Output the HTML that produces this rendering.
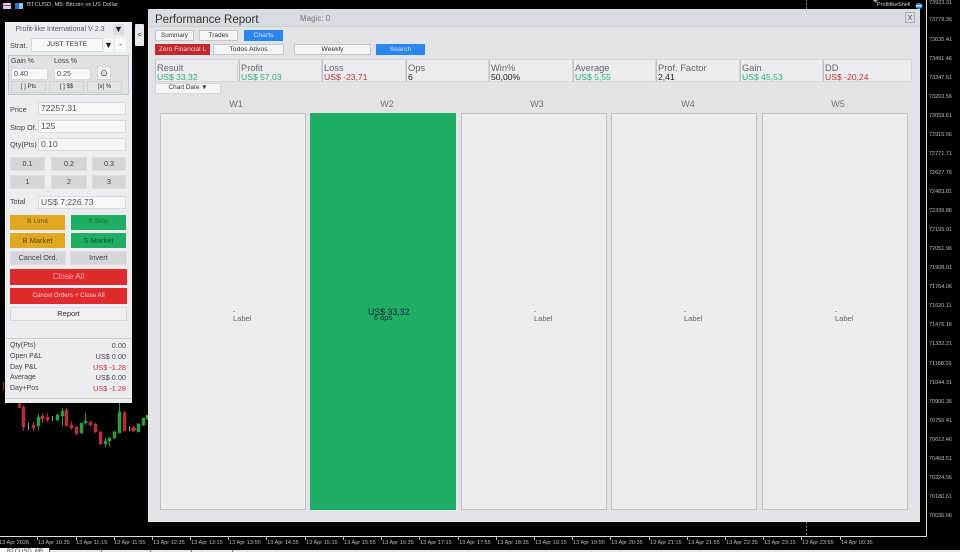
<!DOCTYPE html>
<html><head><meta charset="utf-8"><style>
*{box-sizing:border-box}
html,body{margin:0;padding:0;width:960px;height:552px;overflow:hidden;background:#000;font-family:"Liberation Sans",sans-serif}
div{position:absolute;white-space:nowrap}
.t{line-height:1}
.b{display:flex;align-items:center;justify-content:center;font-size:6.800px;line-height:1;color:#333}
.p{padding-top:2px}
.i{background:#f6f7f8;border:1px solid #d8dade;font-size:8.600px;color:#555;line-height:11px;padding-left:2px}
.g{background:#d3d5d9;border:1px solid #dcdee1;color:#444;font-size:7.200px}
.w{background:#f4f5f7;border:1px solid #c4c6cb;color:#333}
.bl{background:#2b86f0;color:#cfe4ff}
.s{background:#ebecf0;border:1px solid #d4d6da;border-left:1.500px solid #bfc1c5;height:23px;top:59px}
.s i{position:absolute;left:1px;top:3px;font:normal 9.300px/10px "Liberation Sans",sans-serif;color:#666}
.s b{position:absolute;left:1px;top:12px;font:normal 8.600px/10px "Liberation Sans",sans-serif;color:#222}
.gr{color:#2bb073!important}.rd{color:#c8333a!important}
.c{top:113px;height:397px;width:146px;background:#ebecf1;border:1px solid #bfc1c5}
.l{font-size:7.500px;color:#666;left:72px;top:201px;line-height:8px}
.d{left:72px;top:197px;width:2px;height:1px;background:#aaa}
.wk{font-size:9px;color:#777;top:100px;width:146px;text-align:center;line-height:9px}
.ax{left:929px;font-size:5.500px;color:#bbb;line-height:7px}
.ti{top:540px;font-size:5.600px;color:#bbb;line-height:7px}
.tk{top:536px;width:1px;height:4px;background:#bbb}
.r{left:10px;font-size:7px;color:#444;line-height:8px}
.v{left:76px;width:50px;text-align:right;font-size:7.300px;line-height:8px;color:#444}
.lb{font-size:7.300px;color:#444;line-height:1}
</style></head><body>

<svg style="position:absolute;left:0;top:0" width="960" height="552">
<rect x="3" y="3" width="8" height="6" fill="#c9d3e6"/><rect x="3" y="5" width="8" height="1" fill="#c33"/>
<rect x="15" y="3" width="4" height="6" fill="#3a6fb5"/><rect x="19" y="3" width="4" height="6" fill="#9dc0e8"/>
<path d="M873 0h5l-2.500 3z" fill="#999"/>
<ellipse cx="919" cy="6" rx="3.500" ry="3" fill="#3f8fd8"/><rect x="916" y="5" width="6" height="1.500" fill="#cde"/>
<path d="M806.500 0V9M806.500 522V536" stroke="#888" stroke-width="1" stroke-dasharray="2 1.500"/>
<path d="M926.500 0V536.500H0" stroke="#ddd" stroke-width="1" fill="none"/>
<path d="M18 403h3v5h-3zM3 382h1v8H3z" fill="#a52a35"/>
<g stroke-width="1">
<g stroke="#b3303c"><path d="M23.500 405V431M33.500 422V431M42.500 413V423M47.500 413V422M66.500 408V426M71.500 421V430M76.500 426V435M90.500 421V427M95.500 423V433M100.500 431V445M124.500 411V431"/></g>
<g stroke="#2f9a45"><path d="M38.500 414V430M57.500 414V421M62.500 408V426M81.500 423V434M85.500 413V425M105.500 438V447M109.500 437V446M114.500 431V439M119.500 403V433M138.500 423V432M143.500 418V426M147.500 415V420"/></g>
<path d="M28.500 423V430M52.500 416V421M129.500 426V431" stroke="#8a9" fill="none"/>
</g>
<g fill="#b3303c" stroke="#b3303c" stroke-width=".5"><rect x="22" y="407" width="3" height="20"/><rect x="32" y="425" width="3" height="3"/><rect x="41" y="416" width="3" height="3"/><rect x="46" y="417" width="3" height="3"/><rect x="65" y="410" width="3" height="16"/><rect x="70" y="425" width="3" height="3"/><rect x="75" y="427" width="3" height="7"/><rect x="89" y="422" width="3" height="3"/><rect x="94" y="424" width="3" height="8"/><rect x="99" y="432" width="3" height="12"/><rect x="123" y="413" width="3" height="18"/><path d="M133.500 426l3 3-3 3-3-3z"/></g>
<g fill="#2f9a45" stroke="#2f9a45" stroke-width=".5"><rect x="37" y="417" width="3" height="9"/><rect x="56" y="415" width="3" height="5"/><rect x="61" y="411" width="3" height="5"/><rect x="80" y="423" width="3" height="10"/><rect x="84" y="421" width="3" height="2"/><rect x="104" y="441" width="3" height="3"/><rect x="108" y="438" width="3" height="3"/><rect x="113" y="432" width="3" height="6"/><rect x="118" y="412" width="3" height="21"/><rect x="137" y="424" width="3" height="8"/><rect x="142" y="418" width="3" height="7"/><rect x="146" y="415" width="3" height="4"/></g>
</svg>
<div class="t" style="left:27px;top:3px;font-size:5.900px;color:#ccc">BTCUSD, M5: Bitcoin vs US Dollar</div>
<div class="t" style="left:877px;top:3px;font-size:5.500px;color:#ccc">ProfitlikeShell</div>

<div class="ax" style="top:0px">73923.31</div><div class="ax" style="top:17px">73779.36</div><div class="ax" style="top:37px">73635.41</div><div class="ax" style="top:56px">73491.46</div><div class="ax" style="top:75px">73347.51</div><div class="ax" style="top:94px">73203.56</div><div class="ax" style="top:113px">73059.61</div><div class="ax" style="top:132px">72915.66</div><div class="ax" style="top:151px">72771.71</div><div class="ax" style="top:170px">72627.76</div><div class="ax" style="top:189px">72483.81</div><div class="ax" style="top:208px">72339.86</div><div class="ax" style="top:227px">72195.91</div><div class="ax" style="top:246px">72051.96</div><div class="ax" style="top:265px">71908.01</div><div class="ax" style="top:284px">71764.06</div><div class="ax" style="top:303px">71620.11</div><div class="ax" style="top:322px">71476.16</div><div class="ax" style="top:341px">71332.21</div><div class="ax" style="top:361px">71188.26</div><div class="ax" style="top:380px">71044.31</div><div class="ax" style="top:399px">70900.36</div><div class="ax" style="top:418px">70756.41</div><div class="ax" style="top:437px">70612.46</div><div class="ax" style="top:456px">70468.51</div><div class="ax" style="top:475px">70324.56</div><div class="ax" style="top:494px">70180.61</div><div class="ax" style="top:513px">70036.66</div>

<div class="ti" style="left:-1px">13 Apr 2026</div>
<div class="tk" style="left:37px"></div><div class="ti" style="left:38px">13 Apr 10:35</div>
<div class="tk" style="left:76px"></div><div class="ti" style="left:76px">13 Apr 11:15</div>
<div class="tk" style="left:114px"></div><div class="ti" style="left:114px">13 Apr 11:55</div>
<div class="tk" style="left:152px"></div><div class="ti" style="left:153px">13 Apr 12:35</div>
<div class="tk" style="left:190px"></div><div class="ti" style="left:191px">13 Apr 13:15</div>
<div class="tk" style="left:228px"></div><div class="ti" style="left:229px">13 Apr 13:55</div>
<div class="tk" style="left:266px"></div><div class="ti" style="left:267px">13 Apr 14:35</div>
<div class="tk" style="left:305px"></div><div class="ti" style="left:306px">13 Apr 15:15</div>
<div class="tk" style="left:343px"></div><div class="ti" style="left:344px">13 Apr 15:55</div>
<div class="tk" style="left:381px"></div><div class="ti" style="left:382px">13 Apr 16:35</div>
<div class="tk" style="left:419px"></div><div class="ti" style="left:420px">13 Apr 17:15</div>
<div class="tk" style="left:458px"></div><div class="ti" style="left:459px">13 Apr 17:55</div>
<div class="tk" style="left:496px"></div><div class="ti" style="left:497px">13 Apr 18:35</div>
<div class="tk" style="left:534px"></div><div class="ti" style="left:535px">13 Apr 19:15</div>
<div class="tk" style="left:572px"></div><div class="ti" style="left:573px">13 Apr 19:55</div>
<div class="tk" style="left:610px"></div><div class="ti" style="left:611px">13 Apr 20:35</div>
<div class="tk" style="left:649px"></div><div class="ti" style="left:650px">13 Apr 21:15</div>
<div class="tk" style="left:687px"></div><div class="ti" style="left:688px">13 Apr 21:55</div>
<div class="tk" style="left:725px"></div><div class="ti" style="left:726px">13 Apr 22:35</div>
<div class="tk" style="left:763px"></div><div class="ti" style="left:764px">13 Apr 23:15</div>
<div class="tk" style="left:801px"></div><div class="ti" style="left:802px">13 Apr 23:55</div>
<div class="tk" style="left:840px"></div><div class="ti" style="left:841px">14 Apr 00:35</div>

<div style="left:0;top:550px;width:960px;height:2px;background:#e8e8e8"></div>
<div style="left:101px;top:550px;width:1px;height:2px;background:#777"></div>
<div style="left:150px;top:550px;width:1px;height:2px;background:#777"></div>
<div style="left:191px;top:550px;width:1px;height:2px;background:#777"></div>
<div style="left:232px;top:550px;width:1px;height:2px;background:#777"></div>
<div style="left:0;top:548px;width:50px;height:4px;background:#fff;border-right:1px solid #555;overflow:hidden;font-size:6px;line-height:6px;color:#333;padding:1px 0 0 7px">BTCUSD, M5</div>

<div style="left:5px;top:22px;width:127px;height:381px;background:#ebedf0"></div>
<div class="t" style="left:5px;top:25px;width:110px;text-align:center;font-size:7.100px;line-height:9px;color:#555">Profit-like International V 2.3</div>
<div class="b" style="left:113px;top:24px;width:11px;height:11px;background:#dcdee2;font-size:9px;color:#222">▼</div>
<div class="t lb" style="left:10px;top:42px">Strat.</div>
<div class="b w" style="left:31px;top:38px;width:72px;height:14px;background:#f6f7f8;border-color:#d5d7db">JUST TESTE</div>
<div class="b" style="left:104px;top:38px;width:9px;height:14px;background:#f6f7f8;font-size:9px;color:#222">▼</div>
<div class="b" style="left:115px;top:38px;width:11px;height:14px;background:#f6f7f8;font-size:8px">-</div>

<div style="left:8px;top:55px;width:121px;height:40px;background:#dfe1e6;border:1px solid #c2c5cb"></div>
<div class="t" style="left:11px;top:58px;font-size:7px;color:#444">Gain %</div>
<div class="t" style="left:54px;top:58px;font-size:7px;color:#444">Loss %</div>
<div class="i" style="left:11px;top:68px;width:37px;height:12px;font-size:7.200px;line-height:10px">0.40</div>
<div class="i" style="left:54px;top:68px;width:37px;height:12px;font-size:7.200px;line-height:10px">0.25</div>
<div class="b" style="left:97px;top:66px;width:14px;height:14px;background:#f2f3f5;border:1px solid #d0d2d6;font-size:9px;color:#333">⊙</div>
<div class="b" style="left:11px;top:81px;width:35px;height:12px;background:#dfe1e6;border:1px solid #cfd1d6;font-size:6px">[ ] Pts</div>
<div class="b" style="left:49px;top:81px;width:35px;height:12px;background:#dfe1e6;border:1px solid #cfd1d6;font-size:6px">[ ] $$</div>
<div class="b" style="left:87px;top:81px;width:35px;height:12px;background:#dfe1e6;border:1px solid #cfd1d6;font-size:6px">[x] %</div>

<div class="t lb" style="left:10px;top:106px">Price</div>
<div class="i" style="left:38px;top:102px;width:88px;height:13px">72257.31</div>
<div class="t lb" style="left:10px;top:124px">Stop Of.</div>
<div class="i" style="left:38px;top:120px;width:88px;height:13px">125</div>
<div class="t lb" style="left:10px;top:141px">Qty(Pts)</div>
<div class="i" style="left:38px;top:138px;width:88px;height:13px">0.10</div>

<div class="b g" style="left:10px;top:157px;width:35px;height:14px">0.1</div>
<div class="b g" style="left:51px;top:157px;width:36px;height:14px">0.2</div>
<div class="b g" style="left:92px;top:157px;width:34px;height:14px">0.3</div>
<div class="b g" style="left:10px;top:175px;width:35px;height:14px">1</div>
<div class="b g" style="left:51px;top:175px;width:36px;height:14px">2</div>
<div class="b g" style="left:92px;top:175px;width:34px;height:14px">3</div>

<div class="t lb" style="left:10px;top:198px">Total</div>
<div class="i" style="left:38px;top:196px;width:88px;height:13px">US$ 7,226.73</div>

<div class="b" style="left:10px;top:215px;width:55px;height:15px;background:#e2a81f;color:#6a5216;font-size:6.800px">B Limit</div>
<div class="b" style="left:71px;top:215px;width:55px;height:15px;background:#1fae64;color:#0d6a3c;font-size:6.800px">S Stop</div>
<div class="b" style="left:10px;top:233px;width:55px;height:15px;background:#e2a81f;color:#5a4612;font-size:7.500px">B Market</div>
<div class="b" style="left:71px;top:233px;width:55px;height:15px;background:#1fae64;color:#0c5a34;font-size:7.500px">S Market</div>
<div class="b g" style="left:10px;top:251px;width:56px;height:14px;font-size:7.300px">Cancel Ord.</div>
<div class="b g" style="left:70px;top:251px;width:57px;height:14px;font-size:7.500px">Invert</div>
<div class="b" style="left:10px;top:269px;width:117px;height:16px;background:#e02b2e;color:#f3a5a5;font-size:8.200px">Close All</div>
<div class="b" style="left:10px;top:288px;width:117px;height:16px;background:#e02b2e;color:#f9d0d0;font-size:6.300px">Cancel Orders + Close All</div>
<div class="b" style="left:10px;top:307px;width:117px;height:14px;background:#eeeff1;border:1px solid #d6d8db;font-size:7.500px">Report</div>

<div style="left:5px;top:338px;width:127px;height:1px;background:#c8cacf"></div>
<div style="left:5px;top:398px;width:127px;height:1px;background:#c8cacf"></div>
<div class="r" style="top:342px">Qty(Pts)</div><div class="v" style="top:342px">0.00</div>
<div class="r" style="top:353px">Open P&amp;L</div><div class="v" style="top:353px">US$ 0.00</div>
<div class="r" style="top:364px">Day P&amp;L</div><div class="v rd" style="top:364px">US$ -1.28</div>
<div class="r" style="top:374px">Average</div><div class="v" style="top:374px">US$ 0.00</div>
<div class="r" style="top:385px">Day+Pos</div><div class="v rd" style="top:385px">US$ -1.28</div>

<div class="b" style="left:135px;top:24px;width:9px;height:22px;background:#e6e8eb;border-radius:1px;font-size:7px;color:#222">&lt;</div>

<div style="left:148px;top:9px;width:772px;height:513px;background:#e1e3e7"></div>
<div style="left:148px;top:9px;width:772px;height:18px;background:#d9dce3;border-bottom:1px solid #cdd0d6"></div>
<div class="t" style="left:155px;top:14px;font-size:11.500px;line-height:13px;color:#333">Performance Report</div>
<div class="t" style="left:300px;top:15px;font-size:8px;color:#777">Magic: 0</div>
<div class="b" style="left:905px;top:12px;width:10px;height:11px;border:1px solid #a9acb2;font-size:7.500px;color:#555">X</div>

<div class="b w p" style="left:155px;top:30px;width:39px;height:11px;font-size:6.300px">Summary</div>
<div class="b w p" style="left:199px;top:30px;width:39px;height:11px;font-size:6.500px">Trades</div>
<div class="b bl p" style="left:244px;top:30px;width:39px;height:11px;font-size:6.800px">Charts</div>
<div class="b p" style="left:155px;top:44px;width:55px;height:11px;background:#c0282d;color:#f6d3d3;font-size:6.600px">Zero Financial L</div>
<div class="b w p" style="left:213px;top:44px;width:71px;height:11px">Todos Ativos</div>
<div class="b w p" style="left:294px;top:44px;width:77px;height:11px">Weekly</div>
<div class="b bl p" style="left:376px;top:44px;width:49px;height:11px">Search</div>

<div class="s" style="left:155px;width:83px"><i>Result</i><b class="gr">US$ 33,32</b></div>
<div class="s" style="left:239px;width:83px"><i>Profit</i><b class="gr">US$ 57,03</b></div>
<div class="s" style="left:322px;width:84px"><i>Loss</i><b class="rd">US$ -23,71</b></div>
<div class="s" style="left:406px;width:83px"><i>Ops</i><b>6</b></div>
<div class="s" style="left:489px;width:84px"><i>Win%</i><b>50,00%</b></div>
<div class="s" style="left:573px;width:83px"><i>Average</i><b class="gr">US$ 5,55</b></div>
<div class="s" style="left:656px;width:84px"><i>Prof. Factor</i><b>2,41</b></div>
<div class="s" style="left:740px;width:83px"><i>Gain</i><b class="gr">US$ 45,53</b></div>
<div class="s" style="left:823px;width:89px"><i>DD</i><b class="rd">US$ -20,24</b></div>

<div class="b w" style="left:155px;top:83px;width:66px;height:11px;border-color:#d4d6da;font-size:6.400px">Chart Date ▼</div>

<div class="wk" style="left:163px">W1</div>
<div class="wk" style="left:314px">W2</div>
<div class="wk" style="left:464px">W3</div>
<div class="wk" style="left:615px">W4</div>
<div class="wk" style="left:765px">W5</div>

<div class="c" style="left:160px"><div class="d"></div><div class="l">Label</div></div>
<div class="c" style="left:310px;background:#1fae64;border-color:#1fae64">
<div class="t" style="left:57px;top:193px;font-size:8.800px;line-height:10px;color:#123">US$ 33,32</div>
<div class="t" style="left:0;width:100%;text-align:center;top:200px;font-size:7.500px;line-height:8px;color:#123">6 ops</div></div>
<div class="c" style="left:461px"><div class="d"></div><div class="l">Label</div></div>
<div class="c" style="left:611px"><div class="d"></div><div class="l">Label</div></div>
<div class="c" style="left:762px"><div class="d"></div><div class="l">Label</div></div>

</body></html>
